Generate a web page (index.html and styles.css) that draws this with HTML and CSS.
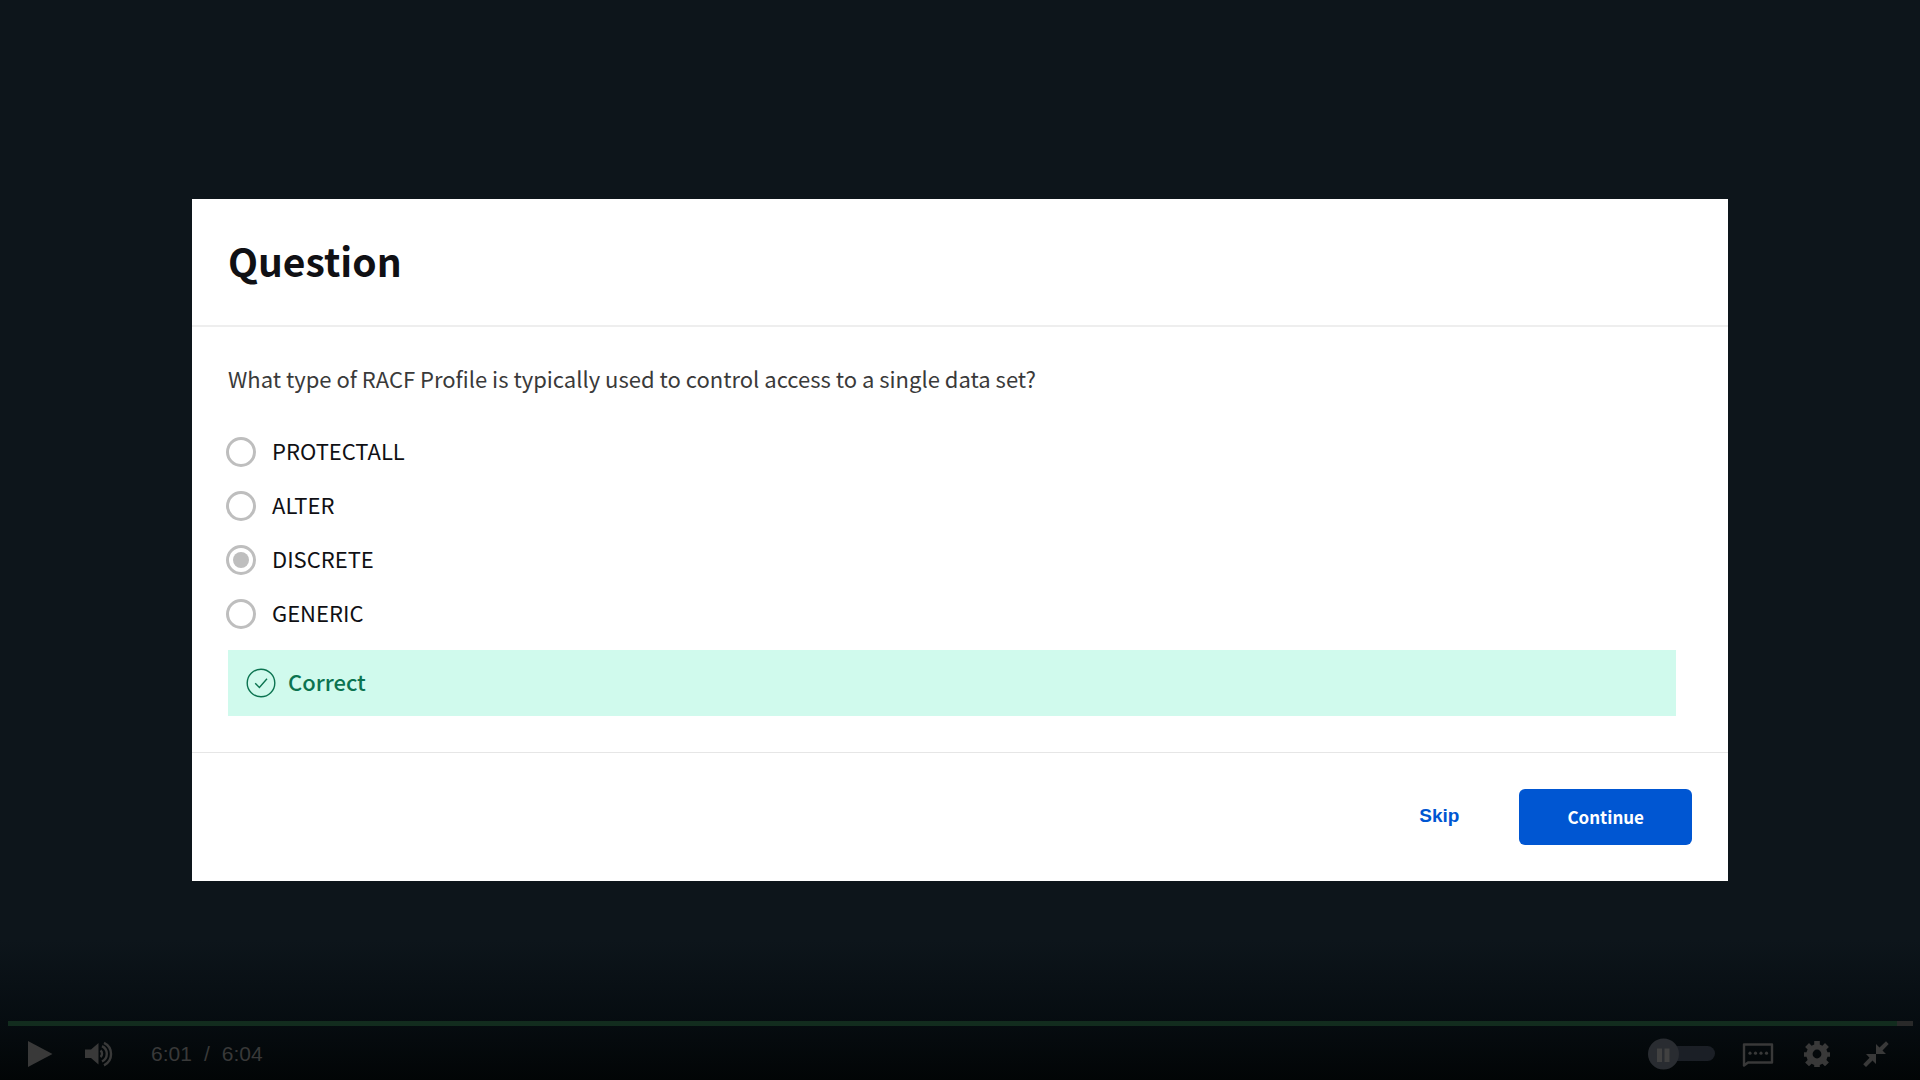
FILE: index.html
```html
<!DOCTYPE html>
<html lang="en">
<head>
<meta charset="utf-8">
<meta name="viewport" content="width=device-width, initial-scale=1">
<title>Question</title>
<link rel="stylesheet" href="styles.css">
</head>
<body>
<main class="stage">
  <form class="dialog" aria-labelledby="dialog-title">
    <header class="dialog-header">
      <h1 class="dialog-title" id="dialog-title">Question</h1>
    </header>
    <fieldset class="dialog-body">
      <legend class="prompt">What type of RACF Profile is typically used to control access to a single data set?</legend>
      <div class="options">
        <label class="option"><input class="radio" type="radio" name="answer" value="protectall"><span class="label-text">PROTECTALL</span></label>
        <label class="option"><input class="radio" type="radio" name="answer" value="alter"><span class="label-text">ALTER</span></label>
        <label class="option"><input class="radio" type="radio" name="answer" value="discrete" checked><span class="label-text">DISCRETE</span></label>
        <label class="option"><input class="radio" type="radio" name="answer" value="generic"><span class="label-text">GENERIC</span></label>
      </div>
      <p class="feedback" role="status">
        <svg class="feedback-icon" viewBox="0 0 30 30" aria-hidden="true"><circle cx="15" cy="15" r="13.8"/><path d="M9.2 15.2l4.2 4.3 7.6-8.8"/></svg>
        <span class="label-text">Correct</span>
      </p>
    </fieldset>
    <footer class="dialog-footer">
      <button class="button button-text" type="button">Skip</button>
      <button class="button button-primary" type="button">Continue</button>
    </footer>
  </form>
</main>
<div class="player">
  <div class="progress"><div class="progress-played" style="width: 99.16%"></div></div>
  <div class="controls">
    <div class="group group-start">
      <button class="control" type="button" aria-label="Play">
        <svg class="icon" viewBox="0 0 32 32"><path d="M4 3l24.500 13L4 29z"/></svg>
      </button>
      <button class="control" type="button" aria-label="Mute">
        <svg class="icon" viewBox="0 0 32 32"><path d="M3 11.500h6l7.500-6.500v21.500L9 20H3z"/><path class="icon-line" d="M18.500 12.500a4.200 4.200 0 0 1 0 6.500M20 8.200a8.500 8.500 0 0 1 0 15.300M22 4.800a12.500 12.500 0 0 1 0 22.500"/></svg>
      </button>
      <p class="time"><span>6:01</span><span>/</span><span>6:04</span></p>
    </div>
    <div class="group group-end">
      <button class="autoplay" type="button" role="switch" aria-checked="false" aria-label="Autoplay">
        <svg class="autoplay-icon" viewBox="0 0 67 32"><rect class="track" x="16" y="8" width="51" height="15" rx="7.500"/><circle class="knob" cx="15.500" cy="16" r="15.500"/><path class="bars" d="M9 10.500h5V24H9zM16.500 10.500h5V24h-5z"/></svg>
      </button>
      <button class="control" type="button" aria-label="Captions">
        <svg class="icon" viewBox="0 0 32 32"><path class="icon-line" d="M2 6.500h28v18H6L2 27.500z" stroke-linejoin="round"/><circle cx="8" cy="15.200" r="1.600"/><circle cx="13.500" cy="15.200" r="1.600"/><circle cx="19" cy="15.200" r="1.600"/><circle cx="24.500" cy="15.200" r="1.600"/></svg>
      </button>
      <button class="control" type="button" aria-label="Settings">
        <svg class="icon" viewBox="0 0 32 32"><path fill-rule="evenodd" d="M13.200 3h5.600v3.600l2.600 1.100 2.600-2.600 3.900 3.900-2.500 2.600 1.100 2.600H29v4.600h-2.500l-1.100 3.100 2.500 2.500-3.900 3.900-2.600-2.500-2.600 1.100V29h-5.600v-2.100l-2.600-1.100L8 28.300l-3.900-3.900 2.500-2.500-1.100-3.100H3v-4.600h2.500l1.100-2.600L4.100 9 8 5.100l2.600 2.600 2.600-1.100zM16 11.600a4.400 4.400 0 1 0 0 8.800 4.400 4.400 0 0 0 0-8.800z"/></svg>
      </button>
      <button class="control" type="button" aria-label="Exit full screen">
        <svg class="icon" viewBox="0 0 32 32"><path d="M16 6l3.500 3.500L26 3.300 28.700 6l-6.200 6.500L26 16H16z"/><path d="M16 16v10l-3.500-3.500L6 29l-2.800-2.800 6.300-6.500L6 16z"/></svg>
      </button>
    </div>
  </div>
</div>
</body>
</html>
```

FILE: styles.css
```css
* {
  box-sizing: border-box;
}

body {
  margin: 0;
  background: #0d151b;
  color: #101014;
  font-family: "Source Sans Pro", "Noto Sans CJK SC", sans-serif;
  font-size: 22px;
  line-height: 32px;
}

button {
  border: 0;
  background: none;
  cursor: pointer;
}

.stage {
  display: grid;
  align-items: center;
  min-height: 100vh;
}

.dialog {
  width: 80%;
  margin: 0 auto;
  background: #fff;
}

.dialog-header {
  padding: 34px 36px 38px;
  border-bottom: 2px solid #eee;
}

.dialog-title {
  margin: 0;
  font-size: 39px;
  font-weight: 700;
  line-height: 54px;
}

.dialog-body {
  min-width: 0;
  margin: 0;
  padding: 36px 52px 36px 36px;
  border: 0;
}

.prompt {
  float: left;
  width: 100%;
  padding: 0;
  color: #3a3a3a;
  line-height: 30px;
}

.options {
  clear: both;
  padding-top: 32px;
}

.option {
  display: flex;
  align-items: center;
  gap: 16px;
  height: 54px;
  margin-left: -2px;
}

.label-text {
  padding-bottom: 4px;
  line-height: 28px;
}

.radio {
  display: grid;
  place-content: center;
  width: 30px;
  height: 30px;
  margin: 0;
  border: 3px solid #bebebe;
  border-radius: 50%;
  appearance: none;
}

.radio:checked::before {
  content: "";
  width: 16px;
  height: 16px;
  border-radius: 50%;
  background: #bebebe;
}

.feedback {
  display: flex;
  align-items: center;
  gap: 12px;
  margin: 9px 0 0;
  padding: 17px 18px;
  background: #d0faed;
  color: #0b7350;
  font-weight: 500;
}

.feedback-icon {
  width: 30px;
  height: 30px;
  fill: none;
  stroke: currentColor;
  stroke-width: 1.4;
}

.dialog-footer {
  display: flex;
  justify-content: flex-end;
  gap: 12px;
  padding: 36px;
  border-top: 1px solid #e6e6e6;
}

.button {
  height: 56px;
  padding: 0 48px 2px;
  border-radius: 6px;
  color: #0056d2;
  font-weight: 700;
}

.button-text {
  font-family: "Liberation Sans", Arial, sans-serif;
  font-size: 19px;
}

.button-primary {
  background: #0056d2;
  color: #fff;
  font-family: inherit;
  font-size: 17px;
}

.player {
  position: fixed;
  right: 0;
  bottom: 0;
  left: 0;
  padding: 81px 7px 0 8px;
  background: linear-gradient(#0d151b, #060c10 60%, #020506);
}

.progress {
  height: 5px;
  background: #292929;
}

.progress-played {
  height: 100%;
  background: #122c1e;
}

.controls {
  display: flex;
  align-items: center;
  justify-content: space-between;
  height: 54px;
  padding: 2px 21px 0 16px;
}

.group {
  display: flex;
  align-items: center;
}

.group-start {
  gap: 26px;
}

.group-end {
  gap: 27px;
}

.control,
.autoplay {
  display: block;
  padding: 0;
  color: #393939;
}

.icon {
  display: block;
  width: 32px;
  height: 32px;
  fill: currentColor;
}

.icon-line {
  fill: none;
  stroke: currentColor;
  stroke-width: 2.4;
}

.autoplay-icon {
  display: block;
  width: 67px;
  height: 32px;
}

.track {
  fill: #1b1f26;
}

.knob {
  fill: #292c31;
}

.bars {
  fill: #414141;
}

.time {
  display: flex;
  gap: 12px;
  margin: 0 0 0 11px;
  color: #393939;
  font-family: "Liberation Sans", Arial, sans-serif;
  font-size: 21px;
}
```
